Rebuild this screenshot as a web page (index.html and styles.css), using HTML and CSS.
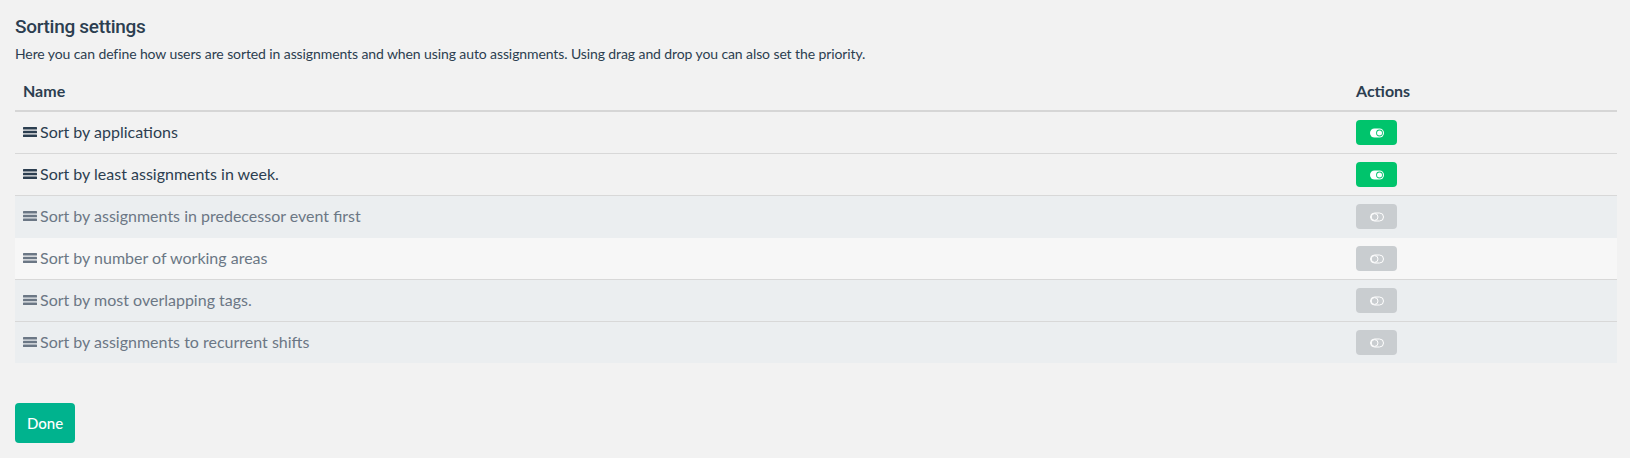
FILE: index.html
```html
<!DOCTYPE html>
<html lang="en">
<head>
<meta charset="utf-8">
<title>Sorting settings</title>
<link rel="stylesheet" href="styles.css">
</head>
<body>
<div class="page">
  <h2 class="title">Sorting settings</h2>
  <p class="desc">Here you can define how users are sorted in assignments and when using auto assignments. Using drag and drop you can also set the priority.</p>
  <table class="sort-table">
    <thead>
      <tr>
        <th class="col-name">Name</th>
        <th class="col-actions">Actions</th>
      </tr>
    </thead>
    <tbody>
      <tr class="row row-on">
        <td class="cell-name"><div class="name"><svg class="bars" viewBox="0 0 14 10" width="14" height="10"><rect x="0" y="0" width="14" height="2.4" rx="0.5"/><rect x="0" y="3.8" width="14" height="2.4" rx="0.5"/><rect x="0" y="7.6" width="14" height="2.4" rx="0.5"/></svg><span>Sort by applications</span></div></td>
        <td class="cell-actions"><button class="toggle toggle-on"><svg viewBox="0 0 14 10" width="14" height="10"><rect x="0" y="0.5" width="14" height="9" rx="4.5" fill="#fff"/><circle cx="9.5" cy="5" r="3.4" fill="#00c46c"/><circle cx="9.5" cy="5" r="2.5" fill="#fff"/></svg></button></td>
      </tr>
      <tr class="row row-on">
        <td class="cell-name"><div class="name"><svg class="bars" viewBox="0 0 14 10" width="14" height="10"><rect x="0" y="0" width="14" height="2.4" rx="0.5"/><rect x="0" y="3.8" width="14" height="2.4" rx="0.5"/><rect x="0" y="7.6" width="14" height="2.4" rx="0.5"/></svg><span>Sort by least assignments in week.</span></div></td>
        <td class="cell-actions"><button class="toggle toggle-on"><svg viewBox="0 0 14 10" width="14" height="10"><rect x="0" y="0.5" width="14" height="9" rx="4.5" fill="#fff"/><circle cx="9.5" cy="5" r="3.4" fill="#00c46c"/><circle cx="9.5" cy="5" r="2.5" fill="#fff"/></svg></button></td>
      </tr>
      <tr class="row row-off">
        <td class="cell-name"><div class="name"><svg class="bars" viewBox="0 0 14 10" width="14" height="10"><rect x="0" y="0" width="14" height="2.4" rx="0.5"/><rect x="0" y="3.8" width="14" height="2.4" rx="0.5"/><rect x="0" y="7.6" width="14" height="2.4" rx="0.5"/></svg><span>Sort by assignments in predecessor event first</span></div></td>
        <td class="cell-actions"><button class="toggle toggle-off"><svg viewBox="0 0 14 10" width="14" height="10"><rect x="0.5" y="1" width="13" height="8" rx="4" fill="none" stroke="#fff" stroke-width="1"/><circle cx="4.6" cy="5" r="3.4" fill="none" stroke="#fff" stroke-width="1"/></svg></button></td>
      </tr>
      <tr class="row row-off row-light">
        <td class="cell-name"><div class="name"><svg class="bars" viewBox="0 0 14 10" width="14" height="10"><rect x="0" y="0" width="14" height="2.4" rx="0.5"/><rect x="0" y="3.8" width="14" height="2.4" rx="0.5"/><rect x="0" y="7.6" width="14" height="2.4" rx="0.5"/></svg><span>Sort by number of working areas</span></div></td>
        <td class="cell-actions"><button class="toggle toggle-off"><svg viewBox="0 0 14 10" width="14" height="10"><rect x="0.5" y="1" width="13" height="8" rx="4" fill="none" stroke="#fff" stroke-width="1"/><circle cx="4.6" cy="5" r="3.4" fill="none" stroke="#fff" stroke-width="1"/></svg></button></td>
      </tr>
      <tr class="row row-off">
        <td class="cell-name"><div class="name"><svg class="bars" viewBox="0 0 14 10" width="14" height="10"><rect x="0" y="0" width="14" height="2.4" rx="0.5"/><rect x="0" y="3.8" width="14" height="2.4" rx="0.5"/><rect x="0" y="7.6" width="14" height="2.4" rx="0.5"/></svg><span>Sort by most overlapping tags.</span></div></td>
        <td class="cell-actions"><button class="toggle toggle-off"><svg viewBox="0 0 14 10" width="14" height="10"><rect x="0.5" y="1" width="13" height="8" rx="4" fill="none" stroke="#fff" stroke-width="1"/><circle cx="4.6" cy="5" r="3.4" fill="none" stroke="#fff" stroke-width="1"/></svg></button></td>
      </tr>
      <tr class="row row-off">
        <td class="cell-name"><div class="name"><svg class="bars" viewBox="0 0 14 10" width="14" height="10"><rect x="0" y="0" width="14" height="2.4" rx="0.5"/><rect x="0" y="3.8" width="14" height="2.4" rx="0.5"/><rect x="0" y="7.6" width="14" height="2.4" rx="0.5"/></svg><span>Sort by assignments to recurrent shifts</span></div></td>
        <td class="cell-actions"><button class="toggle toggle-off"><svg viewBox="0 0 14 10" width="14" height="10"><rect x="0.5" y="1" width="13" height="8" rx="4" fill="none" stroke="#fff" stroke-width="1"/><circle cx="4.6" cy="5" r="3.4" fill="none" stroke="#fff" stroke-width="1"/></svg></button></td>
      </tr>
    </tbody>
  </table>
  <div class="footer">
    <button class="btn-done">Done</button>
  </div>
</div>
</body>
</html>
```

FILE: styles.css
```css
html, body {
  margin: 0;
  padding: 0;
  background: #f2f2f2;
}

body {
  font-family: Lato, "Noto Sans", sans-serif;
  color: #2c3e50;
}

.page {
  padding: 14px 13px 0 15px;
}

.title {
  margin: 0;
  font-family: Roboto, "Liberation Sans", sans-serif;
  font-weight: 500;
  font-size: 19px;
  line-height: 25px;
  letter-spacing: -0.3px;
  color: #2c3e50;
}

.desc {
  margin: 5px 0 0;
  font-size: 14px;
  line-height: 20px;
  letter-spacing: -0.1px;
  color: #2c3e50;
}

.sort-table {
  width: 100%;
  margin-top: 8px;
  border-collapse: collapse;
  border-spacing: 0;
}

.sort-table th {
  text-align: left;
  font-weight: 700;
  font-size: 16px;
  line-height: 22px;
  padding: 8px 8px;
  border-bottom: 2px solid #d6d6d6;
  color: #2c3e50;
}

.col-actions {
  width: 253px;
}

.row td {
  padding: 8px 8px;
  font-size: 16px;
  line-height: 22px;
  vertical-align: middle;
  border-top: 1px solid #d8d8d8;
}

.sort-table tbody tr:first-child td {
  border-top: none;
}

.row-off {
  background: #ebeef0;
  color: #6b7785;
}

.row-light {
  background: #f7f7f7;
}

.row-light td {
  border-top-color: #ebeef0;
}

.name {
  display: flex;
  align-items: center;
  gap: 3px;
  height: 25px;
  padding-bottom: 2px;
  box-sizing: border-box;
}

.bars {
  display: block;
  flex: none;
}

.row-on .bars {
  fill: #2c3e50;
}

.row-off .bars {
  fill: #6b7785;
}

.toggle {
  display: flex;
  align-items: center;
  justify-content: center;
  width: 41px;
  height: 25px;
  padding: 0;
  border: none;
  border-radius: 4px;
  cursor: pointer;
}

.toggle svg {
  display: block;
}

.toggle-on {
  background: #00c46c;
}

.toggle-off {
  background: #c9cdd0;
}

.footer {
  padding-top: 40px;
}

.btn-done {
  display: block;
  width: 60px;
  height: 40px;
  border: none;
  border-radius: 4px;
  background: #00b38e;
  color: #fff;
  font-family: Lato, "Noto Sans", sans-serif;
  font-size: 15px;
  font-weight: 500;
  padding: 0;
  cursor: pointer;
}
```
